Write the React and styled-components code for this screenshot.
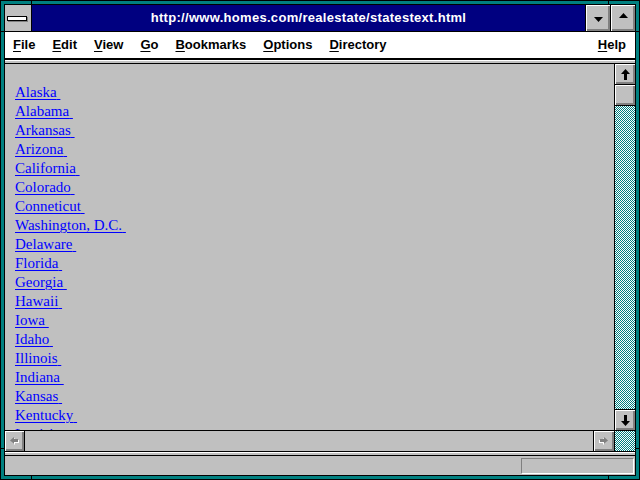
import styled, { createGlobalStyle } from "styled-components";

const GlobalStyle = createGlobalStyle`
  html, body {
    margin: 0;
    padding: 0;
    background: #008080;
  }
  * {
    box-sizing: border-box;
  }
`;

/* colours */
const GRAY = "#c0c0c0";
const DARK = "#808080";
const TEAL = "#008080";
const NAVY = "#000080";

const STATES = [
  "Alaska",
  "Alabama",
  "Arkansas",
  "Arizona",
  "California",
  "Colorado",
  "Conneticut",
  "Washington, D.C.",
  "Delaware",
  "Florida",
  "Georgia",
  "Hawaii",
  "Iowa",
  "Idaho",
  "Illinois",
  "Indiana",
  "Kansas",
  "Kentucky",
  "Louisiana",
];

const MENUS = ["File", "Edit", "View", "Go", "Bookmarks", "Options", "Directory"];

/* window frame */
const Window = styled.div`
  position: relative;
  width: 640px;
  height: 480px;
  border: 1px solid #000;
  background: ${TEAL};
  padding: 3px;
`;
const Tick = styled.span`
  position: absolute;
  background: #000;
  ${(p) =>
    p.$side === "top" || p.$side === "bottom"
      ? `width: 1px; height: 4px; left: ${p.$at - 1}px; ${p.$side}: -1px;`
      : `height: 1px; width: 4px; top: ${p.$at - 1}px; ${p.$side}: -1px;`}
`;
const Inner = styled.div`
  height: 100%;
  border: 1px solid #000;
  background: ${GRAY};
  display: flex;
  flex-direction: column;
`;

/* title bar */
const TitleBar = styled.div`
  display: flex;
  height: 27px;
  border-bottom: 1px solid #000;
  flex-shrink: 0;
`;
const SysBox = styled.div`
  width: 27px;
  border-right: 1px solid #000;
  background: ${GRAY};
  display: flex;
  align-items: center;
  justify-content: center;
`;
const SysBar = styled.span`
  display: block;
  width: 20px;
  height: 5px;
  margin-left: -2px;
  background: #fff;
  border: 1px solid #000;
  box-shadow: 1px 1px 0 ${DARK};
`;
const Caption = styled.div`
  flex: 1;
  background: ${NAVY};
  color: #fff;
  font: bold 13px "Liberation Sans", Arial, sans-serif;
  letter-spacing: 0.3px;
  display: flex;
  align-items: center;
  justify-content: center;
  padding-bottom: 1px;
`;
const TitleButton = styled.div`
  width: 25px;
  border-left: 1px solid #000;
  background: ${GRAY};
  box-shadow: inset 1px 1px 0 #fff, inset -1px -1px 0 ${DARK},
    inset -2px -2px 0 ${DARK};
  display: flex;
  align-items: center;
  justify-content: center;
  padding-top: ${(p) => (p.$down ? "3px" : "0")};
  padding-bottom: ${(p) => (p.$down ? "0" : "5px")};
`;

/* menu bar */
const MenuBar = styled.div`
  display: flex;
  align-items: center;
  gap: 17px;
  height: 28px;
  padding: 0 9px 1px 8px;
  background: #fff;
  border-bottom: 2px solid #000;
  font: bold 13px "Liberation Sans", Arial, sans-serif;
  color: #000;
  flex-shrink: 0;
`;
const MenuItem = styled.span`
  margin-left: ${(p) => (p.$right ? "auto" : "0")};
  & u {
    text-decoration-thickness: 1px;
    text-underline-offset: 2px;
  }
`;
const ToolStrip = styled.div`
  height: 4px;
  flex-shrink: 0;
  border-top: 1px solid #fff;
  border-bottom: 1px solid #000;
  background: ${GRAY};
`;

/* document area */
const Main = styled.div`
  flex: 1;
  display: flex;
  min-height: 0;
`;
const Pane = styled.div`
  flex: 1;
  overflow: hidden;
  padding: 19px 10px 0;
`;
const LinkList = styled.div`
  display: flex;
  flex-direction: column;
  align-items: flex-start;
`;
const StateLink = styled.a`
  color: #0000ff;
  font: 15px/19px "Liberation Serif", "Times New Roman", serif;
  text-decoration: underline;
  text-decoration-thickness: 1px;
  text-underline-offset: 2px;
  cursor: pointer;
`;

/* scroll bars */
const VScroll = styled.div`
  width: 21px;
  border-left: 1px solid #000;
  display: flex;
  flex-direction: column;
`;
const ScrollButton = styled.div`
  height: ${(p) => p.$h || 20}px;
  width: ${(p) => p.$w || 20}px;
  flex-shrink: 0;
  background: ${GRAY};
  box-shadow: inset 1px 1px 0 #fff, inset -1px -1px 0 ${DARK},
    inset -2px -2px 0 ${DARK};
  display: flex;
  align-items: center;
  justify-content: center;
  border-${(p) => p.$edge || "bottom"}: 1px solid #000;
`;
const Dither = styled.div`
  flex: 1;
  background-color: #fff;
  background-image: conic-gradient(
    ${TEAL} 25%,
    #fff 0 50%,
    ${TEAL} 0 75%,
    #fff 0
  );
  background-size: 2px 2px;
`;
const HScrollRow = styled.div`
  display: flex;
  height: 21px;
  flex-shrink: 0;
  border-top: 1px solid #000;
`;
const HTrack = styled.div`
  flex: 1;
  display: flex;
  justify-content: space-between;
  background: ${GRAY};
`;
const Corner = styled(Dither)`
  flex: 0 0 21px;
  border-left: 1px solid #000;
`;

/* status bar */
const StatusSeparator = styled.div`
  height: 5px;
  flex-shrink: 0;
  border-top: 1px solid #000;
  border-bottom: 1px solid #000;
  box-shadow: inset 0 1px 0 #fff;
`;
const StatusBar = styled.div`
  height: 19px;
  flex-shrink: 0;
  display: flex;
  justify-content: flex-end;
  padding: 2px 1px 1px 0;
`;
const StatusField = styled.div`
  width: 113px;
  height: 16px;
  border-top: 1px solid ${DARK};
  border-left: 1px solid ${DARK};
  border-bottom: 1px solid #fff;
  border-right: 1px solid #fff;
`;

/* icons */
function Triangle({ up }) {
  return (
    <svg width="9" height="5" viewBox="0 0 9 5">
      <polygon points={up ? "4.5,0 9,5 0,5" : "0,0 9,0 4.5,5"} fill="#000" />
    </svg>
  );
}

function VArrow({ up }) {
  const pts = "4.5,0 9,5 6,5 6,11 3,11 3,5 0,5";
  return (
    <svg width="9" height="11" viewBox="0 0 9 11">
      <polygon
        points={pts}
        fill="#000"
        transform={up ? undefined : "rotate(180 4.5 5.5)"}
      />
    </svg>
  );
}

function HArrow({ left }) {
  const pts = "0,3.5 4,0 4,2 8,2 8,5 4,5 4,7";
  const flip = left ? "" : "translate(9 0) scale(-1 1)";
  return (
    <svg width="10" height="9" viewBox="0 0 10 9">
      <g transform={flip}>
        <polygon points={pts} fill="#fff" transform="translate(1 1)" />
        <polygon points={pts} fill={DARK} />
      </g>
    </svg>
  );
}

export default function App() {
  return (
    <>
      <GlobalStyle />
      <Window>
        <Tick $side="top" $at={31} />
        <Tick $side="top" $at={608} />
        <Tick $side="bottom" $at={31} />
        <Tick $side="bottom" $at={608} />
        <Tick $side="left" $at={31} />
        <Tick $side="left" $at={448} />
        <Tick $side="right" $at={31} />
        <Tick $side="right" $at={448} />
        <Inner>
          <TitleBar>
            <SysBox>
              <SysBar />
            </SysBox>
            <Caption>http://www.homes.com/realestate/statestext.html</Caption>
            <TitleButton $down>
              <Triangle />
            </TitleButton>
            <TitleButton>
              <Triangle up />
            </TitleButton>
          </TitleBar>
          <MenuBar>
            {MENUS.map((m) => (
              <MenuItem key={m}>
                <u>{m[0]}</u>
                {m.slice(1)}
              </MenuItem>
            ))}
            <MenuItem $right>
              <u>H</u>elp
            </MenuItem>
          </MenuBar>
          <ToolStrip />
          <Main>
            <Pane>
              <LinkList>
                {STATES.map((s) => (
                  <StateLink key={s}>{s}&nbsp;</StateLink>
                ))}
              </LinkList>
            </Pane>
            <VScroll>
              <ScrollButton $h={21}>
                <VArrow up />
              </ScrollButton>
              <ScrollButton $h={21} />
              <Dither />
              <ScrollButton $h={21} $edge="top">
                <VArrow />
              </ScrollButton>
            </VScroll>
          </Main>
          <HScrollRow>
            <HTrack>
              <ScrollButton $w={20} $h={20} $edge="right">
                <HArrow left />
              </ScrollButton>
              <ScrollButton $w={21} $h={20} $edge="left">
                <HArrow />
              </ScrollButton>
            </HTrack>
            <Corner />
          </HScrollRow>
          <StatusSeparator />
          <StatusBar>
            <StatusField />
          </StatusBar>
        </Inner>
      </Window>
    </>
  );
}
